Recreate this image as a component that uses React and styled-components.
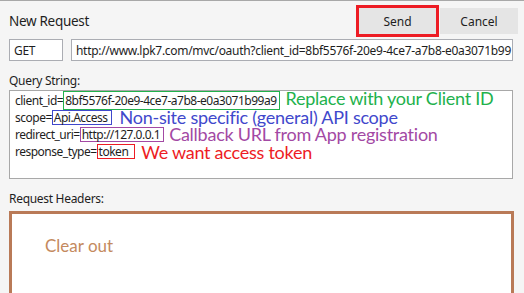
import React from 'react';
import styled, { createGlobalStyle } from 'styled-components';

const GlobalStyle = createGlobalStyle`
  html, body {
    margin: 0;
    padding: 0;
    background: #f5f5f5;
  }
  body {
    font-family: "Noto Sans", "Open Sans", sans-serif;
    font-size: 12px;
    color: #1e1e1e;
  }
`;

const Window = styled.div`
  width: 524px;
  height: 293px;
  overflow: hidden;
  border-top: 1px solid #a8a8a8;
  box-sizing: border-box;
  background: #f5f5f5;
`;

const TopBar = styled.div`
  display: flex;
  align-items: flex-start;
  justify-content: space-between;
  height: 38px;
  padding: 0 6px 0 9px;
`;

const Title = styled.div`
  font-size: 13.5px;
  margin-top: 11px;
  letter-spacing: -0.3px;
`;

const Buttons = styled.div`
  display: flex;
  gap: 4px;
  margin-top: 7px;
`;

const Button = styled.div`
  width: ${p => p.$width}px;
  height: 26px;
  display: flex;
  align-items: center;
  justify-content: center;
  background: #e5e5e5;
  font-size: 12px;
  color: #1e1e1e;
  outline: ${p => (p.$marked ? '3px solid #ed1c24' : 'none')};
`;

const UrlRow = styled.div`
  display: flex;
  gap: 8px;
  padding: 0 11px 0 9px;
`;

const Field = styled.div`
  flex: ${p => (p.$grow ? '1' : `0 0 ${p.$width}px`)};
  height: 22px;
  box-sizing: border-box;
  border: 1px solid #abadb3;
  background: #fff;
  padding: 0 2px 0 4px;
  display: flex;
  align-items: center;
  white-space: nowrap;
  overflow: hidden;
  letter-spacing: -0.3px;
`;

const Label = styled.div`
  padding: 0 9px;
  height: 17px;
  line-height: 17px;
  margin-top: ${p => p.$top}px;
  letter-spacing: -0.3px;
`;

const QueryBox = styled.div`
  margin: 1px 11px 0 9px;
  height: 89px;
  box-sizing: border-box;
  border: 1px solid #a8a8a8;
  background: #fff;
  padding: 1px 5px 0;
`;

const Line = styled.div`
  display: flex;
  align-items: center;
  height: 17px;
  white-space: nowrap;
  letter-spacing: -0.5px;
`;

const Boxed = styled.span`
  border: 1px solid ${p => p.$color};
  padding: ${p => (p.$tall ? '2px 2px 2px 1px' : `0 ${p.$right}px 0 1px`)};
  line-height: 13px;
`;

const Note = styled.span`
  font-family: "Lato", "Open Sans", sans-serif;
  font-size: 18px;
  line-height: 17px;
  letter-spacing: -0.25px;
  color: ${p => p.$color};
  margin-left: ${p => p.$gap}px;
  position: relative;
  top: ${p => p.$shift}px;
`;

const HeaderBox = styled.div`
  margin: 4px 10px 0 9px;
  height: 110px;
  border: 3px solid #b97a57;
  background: #fff;
  padding: 21px 0 0 33px;
`;

const ClearNote = styled.div`
  font-family: "Lato", "Open Sans", sans-serif;
  font-size: 17px;
  color: #c48a5e;
`;

export default function App() {
  return (
    <>
      <GlobalStyle />
      <Window>
        <TopBar>
          <Title>New Request</Title>
          <Buttons>
            <Button $width={77} $marked>Send</Button>
            <Button $width={78}>Cancel</Button>
          </Buttons>
        </TopBar>
        <UrlRow>
          <Field $width={54}>GET</Field>
          <Field $grow>http://www.lpk7.com/mvc/oauth?client_id=8bf5576f-20e9-4ce7-a7b8-e0a3071b99</Field>
        </UrlRow>
        <Label $top={11}>Query String:</Label>
        <QueryBox>
          <Line>
            client_id=<Boxed $color="#22b14c" $tall>8bf5576f-20e9-4ce7-a7b8-e0a3071b99a9</Boxed>
            <Note $color="#22b14c" $gap={6} $shift={-2}>Replace with your Client ID</Note>
          </Line>
          <Line>
            scope=<Boxed $color="#3f48cc" $right={3}>Api.Access</Boxed>
            <Note $color="#3f48cc" $gap={8} $shift={0}>Non-site specific (general) API scope</Note>
          </Line>
          <Line>
            redirect_uri=<Boxed $color="#a349a4" $right={3}>http://127.0.0.1</Boxed>
            <Note $color="#a349a4" $gap={5} $shift={0}>Callback URL from App registration</Note>
          </Line>
          <Line>
            response_type=<Boxed $color="#ed1c24" $right={6}>token</Boxed>
            <Note $color="#ed1c24" $gap={6} $shift={1}>We want access token</Note>
          </Line>
        </QueryBox>
        <Label $top={11}>Request Headers:</Label>
        <HeaderBox>
          <ClearNote>Clear out</ClearNote>
        </HeaderBox>
      </Window>
    </>
  );
}
